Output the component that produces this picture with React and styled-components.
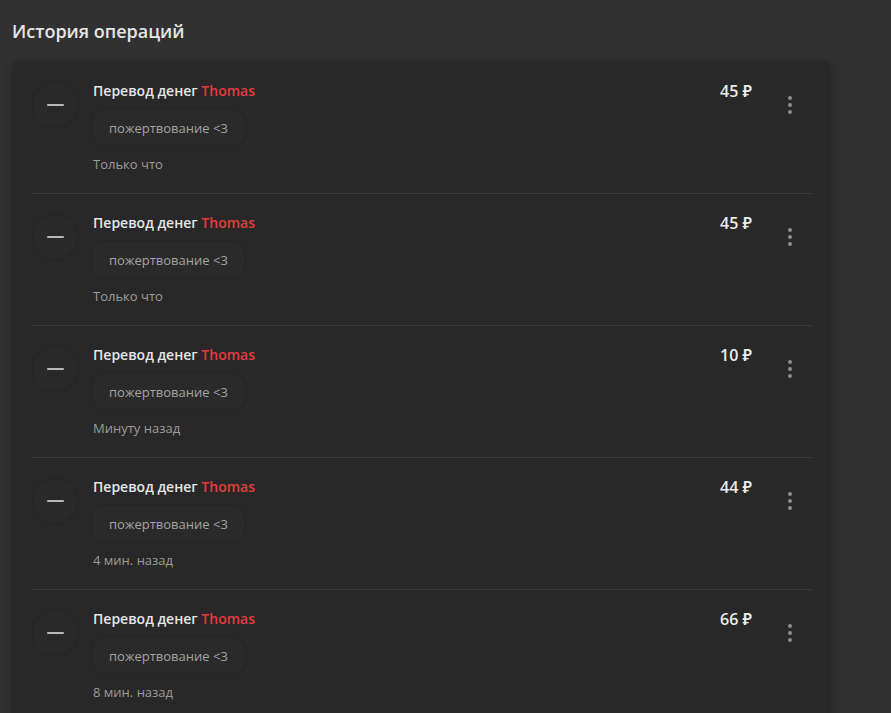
import React from "react";
import styled, { createGlobalStyle } from "styled-components";

const operations = [
  { amount: 45, comment: "пожертвование <3", time: "Только что" },
  { amount: 45, comment: "пожертвование <3", time: "Только что" },
  { amount: 10, comment: "пожертвование <3", time: "Минуту назад" },
  { amount: 44, comment: "пожертвование <3", time: "4 мин. назад" },
  { amount: 66, comment: "пожертвование <3", time: "8 мин. назад" },
];

export default function App() {
  return (
    <>
      <GlobalStyle />
      <Page>
        <Heading>История операций</Heading>
        <Card>
          {operations.map((op, i) => (
            <Row key={i}>
              <Avatar>
                <Dash />
              </Avatar>
              <Info>
                <Title>
                  Перевод денег <Name>Thomas</Name>
                </Title>
                <Chip>{op.comment}</Chip>
                <Time>{op.time}</Time>
              </Info>
              <Amount>{op.amount} ₽</Amount>
              <MenuButton>
                <Dot />
                <Dot />
                <Dot />
              </MenuButton>
            </Row>
          ))}
        </Card>
      </Page>
    </>
  );
}

const GlobalStyle = createGlobalStyle`
  html, body {
    margin: 0;
    background: #313131;
    font-family: "Open Sans", "Noto Sans", sans-serif;
  }
`;

const Page = styled.div`
  height: 713px;
  padding: 19px 12px 0 12px;
  box-sizing: border-box;
  overflow: hidden;
`;

const Heading = styled.h2`
  margin: 0 0 18px 0;
  font-size: 18px;
  line-height: 25px;
  font-weight: 600;
  color: #e6e6e6;
`;

const Card = styled.div`
  width: 819px;
  background: #282828;
  border-radius: 6px;
  box-shadow: 0 0 8px rgba(0, 0, 0, 0.25);
  padding: 0 19px 0 20px;
  box-sizing: border-box;
`;

const Row = styled.div`
  display: flex;
  align-items: flex-start;
  padding: 19px 0 21px 0;
  border-bottom: 1px solid #3b3b3b;
  height: 132px;
  box-sizing: border-box;
`;

const Avatar = styled.div`
  width: 44px;
  height: 44px;
  margin: 2px 16px 0 1px;
  border-radius: 50%;
  background: #292929;
  box-shadow: 0 0 4px rgba(0, 0, 0, 0.12);
  display: flex;
  align-items: center;
  justify-content: center;
  flex-shrink: 0;
`;

const Dash = styled.div`
  width: 17px;
  height: 2px;
  background: #b8b8b8;
  border-radius: 1px;
`;

const Info = styled.div`
  flex: 1;
  display: flex;
  flex-direction: column;
  align-items: flex-start;
`;

const Title = styled.div`
  font-size: 14px;
  line-height: 20px;
  font-weight: 600;
  color: #e6e6e6;
`;

const Name = styled.span`
  color: #e33d3d;
`;

const Chip = styled.div`
  margin-top: 9px;
  height: 35px;
  padding: 0 16px;
  display: flex;
  align-items: center;
  border-radius: 12px;
  background: #2a2a2a;
  box-shadow: 0 0 5px rgba(0, 0, 0, 0.12);
  font-size: 13px;
  color: #a3a3a3;
`;

const Time = styled.div`
  margin-top: 10px;
  font-size: 13px;
  line-height: 18px;
  color: #9c9c9c;
`;

const Amount = styled.div`
  font-size: 16px;
  line-height: 21px;
  font-weight: 600;
  color: #ececec;
  white-space: nowrap;
`;

const MenuButton = styled.div`
  width: 40px;
  margin: 15px 2px 0 18px;
  display: flex;
  flex-direction: column;
  align-items: center;
  gap: 3px;
`;

const Dot = styled.span`
  width: 4px;
  height: 4px;
  border-radius: 50%;
  background: #8d8d8d;
`;
